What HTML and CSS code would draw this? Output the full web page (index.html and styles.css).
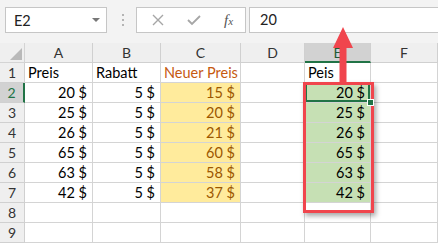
FILE: index.html
```html
<!DOCTYPE html>
<html lang="de">
<head>
<meta charset="UTF-8">
<meta name="viewport" content="width=device-width, initial-scale=1.0">
<title>Neuer Preis</title>
<link rel="stylesheet" href="styles.css">
</head>
<body>
<div class="app">
	<div class="formula-bar">
		<div class="name-box">
			<span>E2</span>
			<span class="caret"></span>
		</div>
		<svg class="grip" width="4" height="14" viewBox="0 0 4 14">
			<rect x="1" y="1" width="2" height="2" fill="#b4b4b4"/>
			<rect x="1" y="6" width="2" height="2" fill="#b4b4b4"/>
			<rect x="1" y="11" width="2" height="2" fill="#b4b4b4"/>
		</svg>
		<div class="fx-buttons">
			<svg width="12" height="12" viewBox="0 0 12 12">
				<path d="M1 1 L11 11 M11 1 L1 11" stroke="#a6a6a6" stroke-width="1.4" fill="none"/>
			</svg>
			<svg width="14" height="12" viewBox="0 0 14 12">
				<path d="M1 6 L5 10 L13 2" stroke="#a6a6a6" stroke-width="1.8" fill="none"/>
			</svg>
			<span class="fx"><i>f</i><small>x</small></span>
		</div>
		<div class="formula-input">20</div>
	</div>

	<div class="sheet">
		<div class="corner"><span class="tri"></span></div>
		<div class="col-head">A</div>
		<div class="col-head">B</div>
		<div class="col-head">C</div>
		<div class="col-head">D</div>
		<div class="col-head selected">E</div>
		<div class="col-head">F</div>

		<div class="row-head">1</div>
		<div class="cell">Preis</div>
		<div class="cell">Rabatt</div>
		<div class="cell title">Neuer Preis</div>
		<div class="cell"></div>
		<div class="cell">Peis</div>
		<div class="cell"></div>

		<div class="row-head selected">2</div>
		<div class="cell num">20 $</div>
		<div class="cell num">5 $</div>
		<div class="cell num neutral">15 $</div>
		<div class="cell"></div>
		<div class="cell num good active">20 $<span class="handle"></span></div>
		<div class="cell"></div>

		<div class="row-head">3</div>
		<div class="cell num">25 $</div>
		<div class="cell num">5 $</div>
		<div class="cell num neutral">20 $</div>
		<div class="cell"></div>
		<div class="cell num good">25 $</div>
		<div class="cell"></div>

		<div class="row-head">4</div>
		<div class="cell num">26 $</div>
		<div class="cell num">5 $</div>
		<div class="cell num neutral">21 $</div>
		<div class="cell"></div>
		<div class="cell num good">26 $</div>
		<div class="cell"></div>

		<div class="row-head">5</div>
		<div class="cell num">65 $</div>
		<div class="cell num">5 $</div>
		<div class="cell num neutral">60 $</div>
		<div class="cell"></div>
		<div class="cell num good">65 $</div>
		<div class="cell"></div>

		<div class="row-head">6</div>
		<div class="cell num">63 $</div>
		<div class="cell num">5 $</div>
		<div class="cell num neutral">58 $</div>
		<div class="cell"></div>
		<div class="cell num good">63 $</div>
		<div class="cell"></div>

		<div class="row-head">7</div>
		<div class="cell num">42 $</div>
		<div class="cell num">5 $</div>
		<div class="cell num neutral">37 $</div>
		<div class="cell"></div>
		<div class="cell num good">42 $</div>
		<div class="cell"></div>

		<div class="row-head">8</div>
		<div class="cell"></div>
		<div class="cell"></div>
		<div class="cell"></div>
		<div class="cell"></div>
		<div class="cell"></div>
		<div class="cell"></div>

		<div class="row-head">9</div>
		<div class="cell"></div>
		<div class="cell"></div>
		<div class="cell"></div>
		<div class="cell"></div>
		<div class="cell"></div>
		<div class="cell"></div>
	</div>

	<!-- callout drawn over the sheet -->
	<div class="red-frame"></div>
	<svg class="arrow" width="20" height="56" viewBox="0 0 20 56">
		<polygon points="10,0 20,21 13.5,21 13.5,56 6.5,56 6.5,21 0,21" fill="#f0454d"/>
	</svg>
</div>
</body>
</html>
```

FILE: styles.css
```css
body {
	margin: 0;
	font-family: Lato, "Open Sans", sans-serif;
	font-size: 14.5px;
	color: #000;
	background: #fff;
}
.app {
	position: relative;
	width: 438px;
	height: 244px;
	overflow: hidden;
}

/* formula bar */
.formula-bar {
	display: flex;
	align-items: flex-start;
	height: 43px;
	box-sizing: border-box;
	padding: 7px 0 0 5px;
	background: #f3f3f3;
}
.name-box {
	display: flex;
	align-items: center;
	justify-content: space-between;
	width: 102px;
	height: 26px;
	box-sizing: border-box;
	padding: 0 6px 0 8px;
	background: #fff;
	border: 1px solid #c6c6c6;
	color: #222;
}
.caret {
	width: 0;
	height: 0;
	border-left: 4px solid transparent;
	border-right: 4px solid transparent;
	border-top: 4px solid #777;
}
.grip {
	margin: 6px 0 0 14px;
}
.fx-buttons {
	display: flex;
	align-items: center;
	gap: 23px;
	width: 110px;
	height: 26px;
	box-sizing: border-box;
	margin-left: 11px;
	padding-left: 15px;
	background: #fff;
	border: 1px solid #c6c6c6;
}
.fx {
	font-family: "Liberation Serif", serif;
	color: #555;
	font-size: 15px;
}
.fx small {
	font-size: 11px;
	font-style: italic;
}
.formula-input {
	flex: 1;
	height: 26px;
	box-sizing: border-box;
	margin-left: 3px;
	padding: 3px 10px;
	background: #fff;
	border: 1px solid #c6c6c6;
	border-right: none;
	color: #222;
}

/* sheet grid */
.sheet {
	display: grid;
	grid-template-columns: 25px 68px 68px 80px 64px 66px 1fr;
	grid-auto-rows: 20px;
}
.sheet > div {
	box-sizing: border-box;
	border-right: 1px solid #d4d4d4;
	border-bottom: 1px solid #d4d4d4;
	line-height: 19px;
	white-space: nowrap;
	overflow: hidden;
}
.corner {
	position: relative;
	background: #efefef;
}
.tri {
	position: absolute;
	right: 2px;
	bottom: 2px;
	width: 0;
	height: 0;
	border-left: 12px solid transparent;
	border-bottom: 12px solid #b9b9b9;
}
.col-head,
.row-head {
	background: #efefef;
	color: #333;
	text-align: center;
	font-size: 14px;
}
.sheet > .col-head {
	border-color: #d0d0d0;
}
.sheet > .row-head {
	border-color: #d0d0d0;
}
.sheet > .col-head.selected {
	background: #d2d2d2;
	border-bottom: 2px solid #217346;
	color: #1e5c36;
}
.sheet > .row-head.selected {
	background: #d2d2d2;
	border-right: 2px solid #217346;
	color: #217346;
}
.cell {
	padding: 0 3px;
}
.num {
	text-align: right;
	padding-right: 5px;
}
.title {
	color: #c65911;
}
.neutral {
	background: #ffeb9c;
	color: #9c5700;
}
.good {
	background: #c6e0b4;
}
.sheet > .active {
	position: relative;
	overflow: visible;
	box-shadow: inset 0 0 0 2px #217346;
}
.handle {
	position: absolute;
	z-index: 2;
	right: -4px;
	bottom: -4px;
	width: 5px;
	height: 5px;
	background: #217346;
	border: 1px solid #fff;
}

/* callout */
.red-frame {
	position: absolute;
	left: 303px;
	top: 82px;
	width: 71px;
	height: 131px;
	box-sizing: border-box;
	border: 3px solid #f0454d;
	box-shadow: 2px 3px 5px rgba(0, 0, 0, 0.35);
}
.arrow {
	position: absolute;
	left: 333px;
	top: 27px;
}
```
